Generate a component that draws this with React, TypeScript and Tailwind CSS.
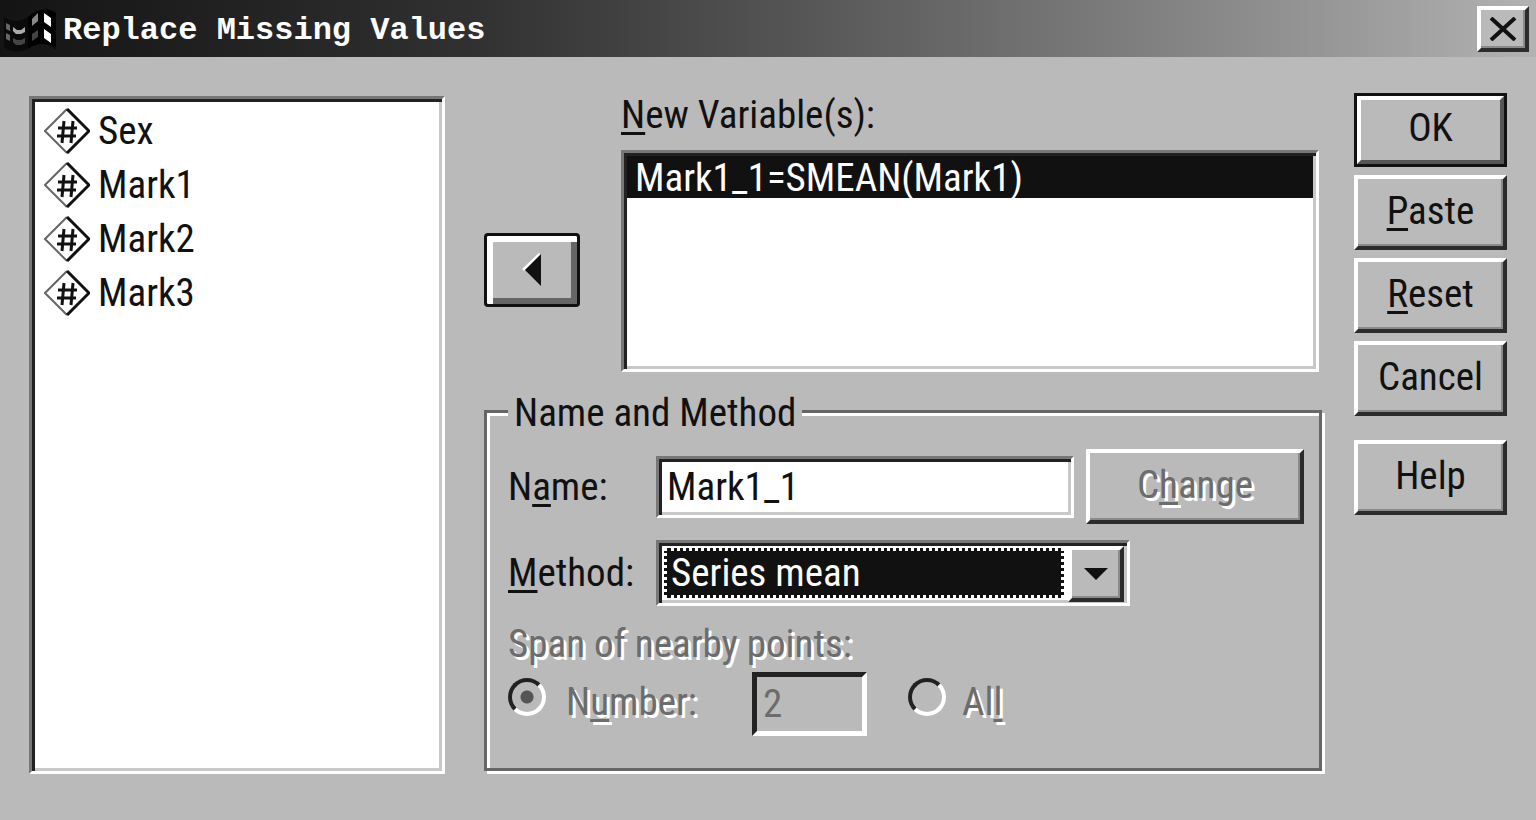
import React, { useState } from "react";

const variables = ["Sex", "Mark1", "Mark2", "Mark3"];

const sunken =
	"border-[3px] border-t-[#777] border-l-[#777] border-r-white border-b-white shadow-[inset_3px_3px_0_#222,inset_-3px_-3px_0_#c8c8c8]";
const raised =
	"border-4 border-t-white border-l-white border-r-[#2c2c2c] border-b-[#2c2c2c] shadow-[inset_-2px_-2px_0_#8a8a8a]";
const etched = "text-[#6c6c6c] [text-shadow:3px_3px_0_#fff]";

// Underlined access key inside a label
function Key({ children }: { children: React.ReactNode }) {
	return <span className="underline decoration-[3px] underline-offset-4 [text-decoration-skip-ink:none]">{children}</span>;
}

function VariableIcon() {
	return (
		<svg className="h-[46px] w-[46px] shrink-0" viewBox="0 0 46 46" fill="none" stroke="#111" aria-hidden="true">
			<path d="M23 1L1 23L23 45" stroke="#666" strokeWidth="2" />
			<path d="M23 1L45 23L23 45" strokeWidth="3" />
			<path d="M20 13L18 35M29 13L27 35M14 20H33M13 28H32" strokeWidth="3" />
		</svg>
	);
}

function TitleBar() {
	return (
		<header className="flex h-[57px] items-center bg-linear-to-r from-[#141414] via-[#303030] via-30% to-[#b2b2b2] pr-[7px] pl-1">
			<svg className="h-12 w-14 shrink-0" viewBox="0 0 56 48" aria-hidden="true">
				<path d="M24 12Q39 -1 52 8V44Q38 34 24 44Z" fill="#000" />
				<path d="M0 12Q12 20 24 12V44Q12 50 0 42Z" fill="#0a0a0a" />
				<path d="M2 18L6 20V26L2 24ZM2 28L6 30V36L2 34Z" fill="#666" />
				<path d="M9 22L13 25L17 25L21 22V27L17 29H12L9 26Z" fill="#aaa" />
				<path d="M9 33L13 35L17 35L21 33V38L17 40H12L9 37Z" fill="#444" />
				<path d="M28 14L34 8V16L28 21Z" fill="#888" />
				<path d="M28 29L34 25V32L28 36Z" fill="#444" />
				<path d="M40 8L47 13V22L40 17ZM40 24L47 29V38L40 33Z" fill="#fff" />
			</svg>
			<h1 className="flex-1 pt-1 pl-[3px] font-['Liberation_Mono',monospace] text-[32px] leading-10 font-bold text-white">
				Replace Missing Values
			</h1>
			<button type="button" aria-label="Close" className={`${raised} flex h-[46px] w-[52px] items-center justify-center bg-[#bababa]`}>
				<svg className="h-6 w-7" viewBox="0 0 28 24" stroke="#111" strokeWidth="4" aria-hidden="true">
					<path d="M2 1L26 23M26 1L2 23" />
				</svg>
			</button>
		</header>
	);
}

function SideButton({ children }: { children: React.ReactNode }) {
	return (
		<button type="button" className={`${raised} h-[75px] w-full pb-1`}>
			{children}
		</button>
	);
}

function RadioButton({ id, checked = false, className = "" }: { id: string; checked?: boolean; className?: string }) {
	return (
		<input
			id={id}
			type="radio"
			name="span"
			disabled
			defaultChecked={checked}
			className={`${className} mt-1.5 h-[38px] w-[38px] shrink-0 appearance-none rounded-full border-4 border-t-[#222] border-r-white border-b-white border-l-[#222] checked:bg-[radial-gradient(circle,#555_6px,transparent_7px)]`}
		/>
	);
}

function App() {
	const [name, setName] = useState("Mark1_1");
	return (
		<div className="flex min-h-screen flex-col bg-[#bababa] font-['Roboto_Condensed','Roboto',sans-serif] text-[39px] leading-10 text-[#111]">
			<TitleBar />
			<main className="flex flex-1 px-[29px] pt-9 pb-[46px]">
				<ul className={`${sunken} mt-[3px] w-[416px] shrink-0 bg-white px-3 pt-[5px]`}>
					{variables.map((variable) => (
						<li key={variable} className="flex h-[54px] items-center gap-2">
							<VariableIcon />
							<span>{variable}</span>
						</li>
					))}
				</ul>

				<div className="ml-[39px] flex min-w-0 flex-1 flex-col">
					<div className="flex gap-[41px] pr-1.5">
						<button
							type="button"
							aria-label="Remove variable"
							className="mt-[140px] flex h-[74px] w-24 shrink-0 items-center justify-center rounded-sm border-[3px] border-[#111] shadow-[inset_6px_6px_0_#fff,inset_-6px_-6px_0_#666]"
						>
							<svg className="h-9 w-5" viewBox="0 0 20 36" aria-hidden="true">
								<path d="M18 2L1 18" stroke="#fff" strokeWidth="3" />
								<path d="M19 2V34L3 18Z" fill="#111" />
							</svg>
						</button>
						<div className="min-w-0 flex-1">
							<h2 id="new-variables" className="h-[57px] pt-0.5">
								<Key>N</Key>ew Variable(s):
							</h2>
							<ul aria-labelledby="new-variables" className={`${sunken} h-[222px] bg-white p-[3px]`}>
								<li className="h-[42px] bg-[#111] pt-0.5 pl-2 text-white">Mark1_1=SMEAN(Mark1)</li>
							</ul>
						</div>
					</div>

					<fieldset className="mt-[17px] mr-[3px] mb-[3px] min-w-0 flex-1 border-[3px] border-[#666] pr-[15px] pb-7 pl-[21px] shadow-[3px_3px_0_#fff,inset_3px_3px_0_#fff]">
						<legend className="bg-[#bababa] px-1.5 pt-1">Name and Method</legend>
						<div className="flex items-center pt-4">
							<label htmlFor="name" className="w-[148px] shrink-0">
								N<Key>a</Key>me:
							</label>
							<input
								id="name"
								className={`${sunken} h-[62px] min-w-0 flex-1 bg-white px-2 outline-none`}
								value={name}
								onChange={(e) => setName(e.target.value)}
							/>
							<button type="button" disabled className={`${raised} ${etched} ml-3 h-[75px] w-[218px] shrink-0 pb-1`}>
								C<Key>h</Key>ange
							</button>
						</div>
						<div className="flex items-center pt-4">
							<label htmlFor="method" className="w-[148px] shrink-0">
								<Key>M</Key>ethod:
							</label>
							<div className={`${sunken} relative h-[66px] w-[474px] bg-white p-[5px]`}>
								<select
									id="method"
									className="h-full w-[400px] appearance-none border-[3px] border-dotted border-white bg-[#111] pl-1 text-white outline-none"
								>
									<option>Series mean</option>
								</select>
								<span className={`${raised} pointer-events-none absolute top-[3px] right-[3px] bottom-[1px] flex w-[56px] items-center justify-center bg-[#bababa]`}>
									<svg className="h-3 w-6" viewBox="0 0 24 12" aria-hidden="true">
										<path d="M0 0H24L12 12Z" fill="#111" />
									</svg>
								</span>
							</div>
						</div>
						<p className={`${etched} pt-[18px]`}>Span of nearby points:</p>
						<div className="flex items-start pt-2">
							<RadioButton id="number" checked />
							<label htmlFor="number" className={`${etched} mt-2.5 ml-5 w-[186px]`}>
								N<Key>u</Key>mber:
							</label>
							<input
								aria-label="Number of nearby points"
								disabled
								value="2"
								className="h-16 w-[115px] border-[5px] border-t-[#222] border-r-white border-b-white border-l-[#222] px-1.5 text-[#6c6c6c]"
							/>
							<RadioButton id="all" className="ml-[41px]" />
							<label htmlFor="all" className={`${etched} mt-2.5 ml-4`}>
								Al<Key>l</Key>
							</label>
						</div>
					</fieldset>
				</div>

				<div className="ml-[29px] flex w-[153px] shrink-0 flex-col gap-2">
					<div className="border-[3px] border-[#111]">
						<button
							type="button"
							className="h-[68px] w-full border-4 border-t-white border-r-[#555] border-b-[#555] border-l-white pb-1"
						>
							OK
						</button>
					</div>
					<SideButton>
						<Key>P</Key>aste
					</SideButton>
					<SideButton>
						<Key>R</Key>eset
					</SideButton>
					<SideButton>Cancel</SideButton>
					<div className="pt-4">
						<SideButton>Help</SideButton>
					</div>
				</div>
			</main>
		</div>
	);
}

export default App;
